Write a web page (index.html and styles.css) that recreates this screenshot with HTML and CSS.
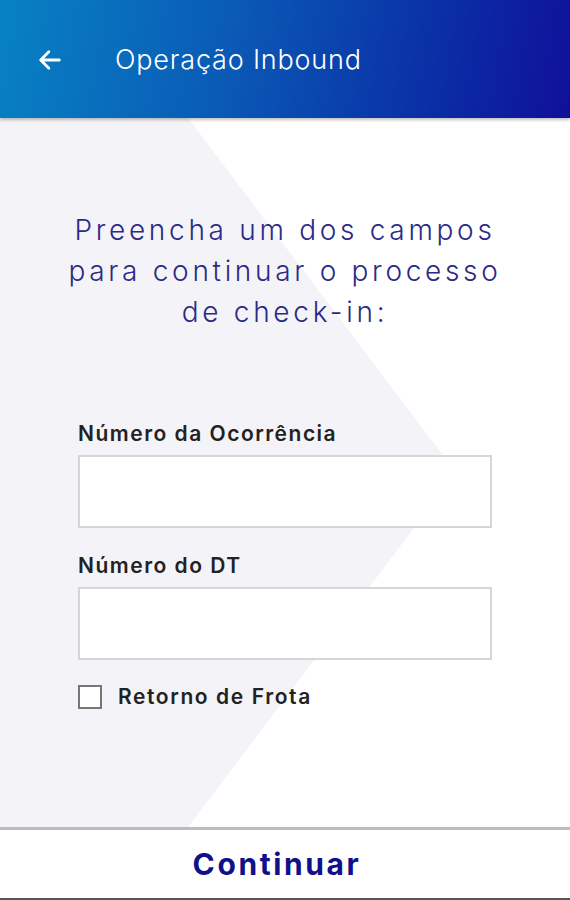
FILE: index.html
```html
<!DOCTYPE html>
<html>
<head>
  <title>Operação Inbound</title>
  <link rel="stylesheet" href="styles.css">
</head>
<body>
  <div class="app">
    <header class="topbar">
      <span class="back">
        <svg width="28" height="28" viewBox="0 0 24 24"><path d="M20 12H5M11 5l-7 7 7 7" fill="none" stroke="#fff" stroke-width="2.4" stroke-linecap="round" stroke-linejoin="round"/></svg>
      </span>
      <h1 class="title">Operação Inbound</h1>
    </header>

    <main class="content">
      <p class="intro">Preencha um dos campos<br>para continuar o processo<br>de check-in:</p>

      <form class="form">
        <label class="field-label" for="ocorrencia">Número da Ocorrência</label>
        <input class="field-input" id="ocorrencia" type="text">

        <label class="field-label" for="dt">Número do DT</label>
        <input class="field-input" id="dt" type="text">

        <label class="check">
          <span class="check-box"></span>
          Retorno de Frota
        </label>
      </form>
    </main>

    <footer class="bottom">
      <button class="continue">Continuar</button>
    </footer>
  </div>
</body>
</html>
```

FILE: styles.css
```css
body {
  margin: 0;
  font-family: Inter, "Open Sans", sans-serif;
  background: #fff;
}
.app {
  width: 570px;
  height: 900px;
  display: flex;
  flex-direction: column;
}
.topbar {
  height: 118px;
  flex-shrink: 0;
  display: flex;
  align-items: center;
  background: linear-gradient(100deg, #0782c3 0%, #0a5ab6 40%, #0a2fa6 75%, #10109a 100%);
  box-shadow: 0 2px 3px rgba(0, 0, 0, 0.25);
  position: relative;
  z-index: 2;
}
.back {
  display: flex;
  margin-left: 36px;
  margin-top: 2px;
}
.title {
  margin: 0 0 0 51px;
  color: #fff;
  font-size: 27px;
  font-weight: 300;
  letter-spacing: 0.8px;
}
.content {
  flex: 1;
  position: relative;
  padding: 0 60px;
}
.content::before {
  content: "";
  position: absolute;
  inset: 0;
  background: #f4f4f8;
  clip-path: polygon(0 0, 33% 0, 80% 50%, 33% 100%, 0 100%);
}
.intro {
  position: relative;
  margin: 92px -20px 0;
  text-align: center;
  color: #2b2b86;
  font-size: 28px;
  font-weight: 300;
  letter-spacing: 3.7px;
  line-height: 41px;
}
.form {
  position: relative;
  display: flex;
  flex-direction: column;
  margin: 88px 18px 0;
}
.field-label {
  font-size: 21px;
  font-weight: 600;
  letter-spacing: 1.5px;
  color: #222;
  margin-bottom: 9px;
}
.field-input {
  height: 73px;
  box-sizing: border-box;
  border: 2px solid #d6d6d6;
  background: #fff;
  margin-bottom: 25px;
  font-size: 20px;
}
.check {
  display: flex;
  align-items: center;
  gap: 16px;
  font-size: 21px;
  font-weight: 600;
  letter-spacing: 1.6px;
  color: #222;
  margin-top: -1px;
}
.check-box {
  width: 20px;
  height: 20px;
  border: 2px solid #777;
  background: #fff;
}
.bottom {
  height: 73px;
  flex-shrink: 0;
  border-top: 3px solid #bcbcbc;
  border-bottom: 2px solid #555;
  box-sizing: border-box;
  display: flex;
}
.continue {
  flex: 1;
  border: none;
  background: #fff;
  color: #10108c;
  font-family: Inter, sans-serif;
  font-size: 30px;
  font-weight: 700;
  letter-spacing: 2.6px;
  padding: 0 16px 0 0;
}
```
